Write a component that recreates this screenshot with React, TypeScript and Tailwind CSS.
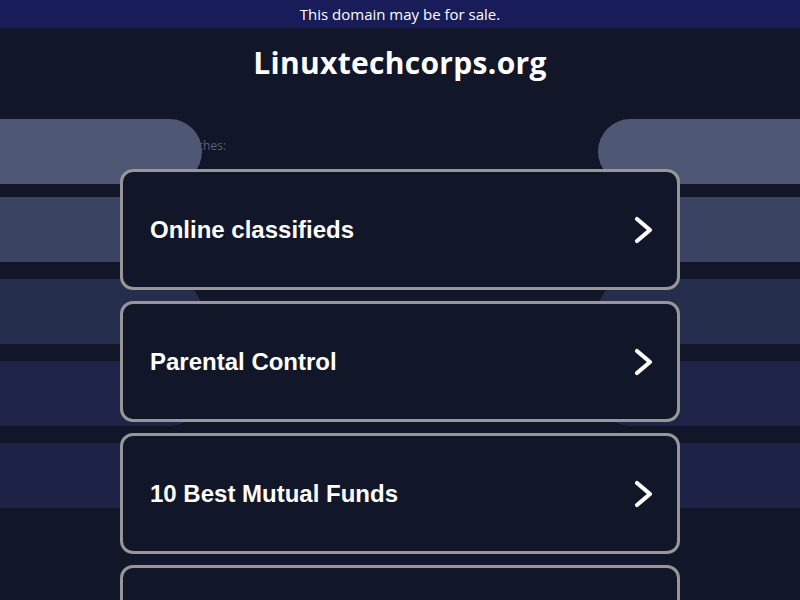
import React from "react";

const items = ["Online classifieds", "Parental Control", "10 Best Mutual Funds", ""];

function Chevron() {
  return (
    <svg width="20" height="28" viewBox="0 0 20 28" fill="none" className="shrink-0">
      <path d="M3 3 L16 14 L3 25" stroke="white" strokeWidth="4.2" strokeLinecap="round" strokeLinejoin="round" />
    </svg>
  );
}

function SplitRow({ color, mt }: { color: string; mt: string }) {
  return (
    <div className={`flex h-[65px] justify-between ${mt}`}>
      <div className={`w-[202px] h-full rounded-r-[33px] ${color}`} />
      <div className={`w-[202px] h-full rounded-l-[33px] ${color}`} />
    </div>
  );
}

export default function App() {
  return (
    <div className="relative w-[800px] h-[600px] overflow-hidden bg-[#111629]" style={{ fontFamily: '"Open Sans", sans-serif' }}>
      <div className="h-[28px] bg-[#181c58] flex items-center justify-center text-white text-[15px]">
        This domain may be for sale.
      </div>
      <div className="h-[111px] pt-[16px] text-center">
        <h1 className="text-white font-bold text-[30px] leading-[38px] tracking-[0.3px]">Linuxtechcorps.org</h1>
      </div>
      <div className="w-[560px] mx-auto pl-[8px] h-[30px] text-[12px] leading-[14px] text-[#585f7e]">
        Related searches:
      </div>

      <div className="absolute left-0 right-0 top-[119px] z-10 flex flex-col">
        <SplitRow color="bg-[#4e5774]" mt="mt-0" />
        <div className="h-[65px] mt-[13px] bg-[#3a4362]" />
        <SplitRow color="bg-[#262e4d]" mt="mt-[17px]" />
        <SplitRow color="bg-[#1d2447]" mt="mt-[17px]" />
        <div className="h-[65px] mt-[17px] bg-[#1c2346]" />
      </div>

      <div className="relative z-20 w-[560px] mx-auto flex flex-col gap-[11px]">
        {items.map((t, i) => (
          <div
            key={i}
            className="h-[121px] rounded-[13px] border-[3px] border-[#979797] bg-[#111629] flex items-center justify-between pl-[27px] pr-[23px]"
          >
            <span className="text-white font-bold text-[24px]" style={{ fontFamily: '"Liberation Sans", Arial, sans-serif' }}>
              {t}
            </span>
            <Chevron />
          </div>
        ))}
      </div>
    </div>
  );
}
